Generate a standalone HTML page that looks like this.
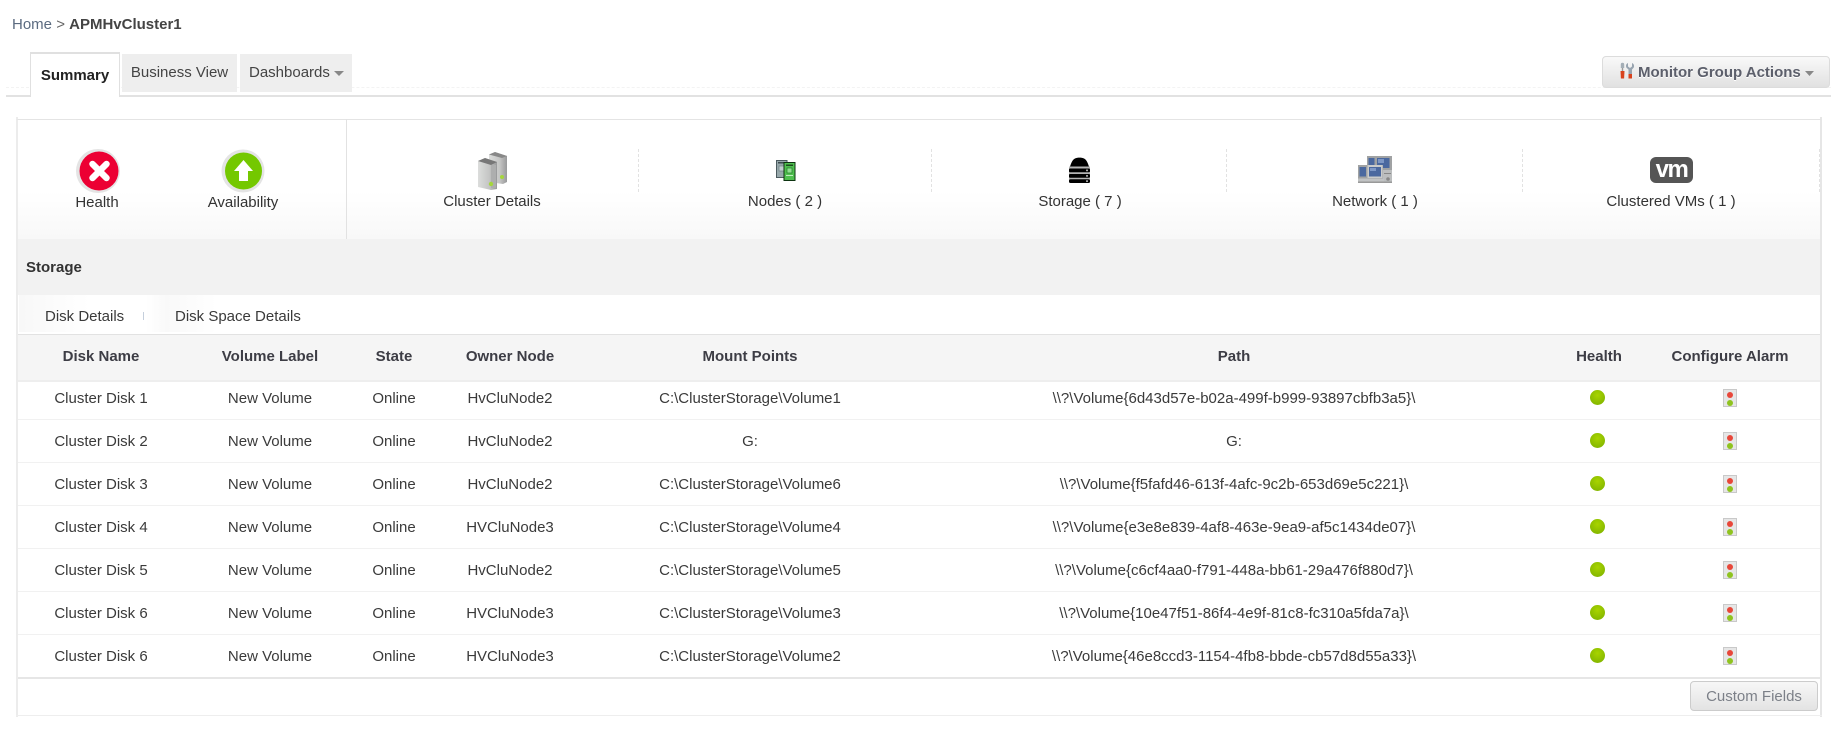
<!DOCTYPE html>
<html><head><meta charset="utf-8"><title>APMHvCluster1</title>
<style>
html,body{margin:0;padding:0;background:#fff}
body{width:1845px;height:730px;position:relative;overflow:hidden;font-family:"Liberation Sans",Arial,sans-serif;font-size:15px;color:#333}
.a{position:absolute}
.t{position:absolute;white-space:nowrap;line-height:20px;height:20px}
.ct{position:absolute;width:400px;text-align:center;white-space:nowrap;line-height:20px;height:20px}
.row{position:absolute;left:18px;width:1802px;height:43px;border-bottom:1px solid #f1f1f1;box-sizing:border-box}
.row span{position:absolute;top:12px;width:400px;text-align:center;white-space:nowrap;line-height:20px;color:#3a3a3a}
.hd span{position:absolute;top:12px;width:400px;text-align:center;white-space:nowrap;line-height:20px;font-weight:bold;color:#3d3d45}
.c1{left:-117px}.c2{left:52px}.c3{left:176px}.c4{left:292px}.c5{left:532px}.c6{left:1016px}.c7{left:1381px}.c8{left:1512px}
.dot{position:absolute;left:1572px;top:13px;width:15px;height:15px;border-radius:50%;background:radial-gradient(circle at 50% 35%,#a8d400,#86b800 75%,#9cc63a)}
.al{position:absolute;left:1705px;top:12px;width:14px;height:18px;box-sizing:border-box;border:1px solid #c9c9c9;background:#e6e6e6}
.al i{position:absolute;left:3px;width:6px;height:6px;border-radius:50%}
.al .r{top:2px;background:#e8473a}.al .g{top:10px;background:#8fc31f}
.sep{position:absolute;top:149px;height:43px;width:0;border-left:1px dashed #e2e2e2}
.tab{position:absolute;top:54px;height:38px;background:#eee;line-height:38px;text-align:center;color:#444}
</style></head><body>
<div class="t" style="left:12px;top:15px;color:#5b6b80">Home <span style="color:#666">&gt;</span> <b style="color:#444">APMHvCluster1</b></div>

<div class="a" style="left:6px;top:87px;width:1825px;border-top:1px dashed #f3f3f3"></div>
<div class="a" style="left:6px;top:95px;width:1825px;height:2px;background:#e2e2e2"></div>
<div class="a" style="left:30px;top:52px;width:90px;height:45px;box-sizing:border-box;border:1px solid #e0e0e0;border-top:2px solid #e0e0e0;border-bottom:0;background:#fff;text-align:center;line-height:43px;font-weight:bold;color:#222">Summary</div>
<div class="tab" style="left:122px;width:115px">Business View</div>
<div class="tab" style="left:240px;width:112px;text-align:left;text-indent:9px">Dashboards<svg width="10" height="6" style="position:absolute;left:94px;top:17px"><path d="M0 0H10L5 5Z" fill="#888"/></svg></div>

<div class="a" style="left:1602px;top:56px;width:228px;height:32px;box-sizing:border-box;border:1px solid #dcdcdc;border-radius:4px;background:linear-gradient(#f9f9f9,#e1e1e1)"></div>
<svg class="a" style="left:1619px;top:62px" width="16" height="17" viewBox="0 0 16 17">
<path d="M1.800 2.500a1.700 1.700 0 0 1 3.400 0V6H1.800Z" fill="#a4aeb6"/><rect x="2.800" y="6" width="1.400" height="3" fill="#999"/><path d="M1.500 9h4l-.4 7.500H1.900Z" fill="#d8431e"/>
<path d="M9 1v3.500l2 1.500 2-1.500V1c2 .8 2.600 3 1.600 4.800L13 7.500V16H9.500V7.500L7.500 5.800C6.500 4 7 1.800 9 1Z" fill="#98a4b0"/><rect x="9.500" y="12" width="3.500" height="4.500" fill="#d8431e"/>
</svg>
<div class="t" style="left:1638px;top:63px;font-weight:bold;color:#5c5f6b;text-shadow:0 1px 0 #fff">Monitor Group Actions</div>
<svg class="a" style="left:1805px;top:71px" width="9" height="6"><path d="M0 0H9L4.500 5Z" fill="#888"/></svg>

<!-- panel -->
<div class="a" style="left:16px;top:117px;width:2px;height:600px;background:#ececec"></div>
<div class="a" style="left:1820px;top:117px;width:2px;height:600px;background:#e6e6e6"></div>
<div class="a" style="left:16px;top:119px;width:1806px;height:120px;box-sizing:border-box;border-top:1px solid #e4e4e4;background:linear-gradient(#fff 60%,#f8f8f8);border-left:2px solid #ececec;border-right:2px solid #e6e6e6"></div>
<div class="a" style="left:346px;top:119px;width:1px;height:120px;background:#e2e2e2"></div>
<div class="sep" style="left:638px"></div><div class="sep" style="left:931px"></div><div class="sep" style="left:1226px"></div><div class="sep" style="left:1522px"></div><div class="sep" style="left:1819px"></div>

<!-- Health icon -->
<svg class="a" style="left:74px;top:147px" width="48" height="48" viewBox="0 0 48 48">
<circle cx="24" cy="24" r="22" fill="#e4e4e4"/><circle cx="25" cy="24" r="19.500" fill="#ec0033"/>
<path d="M25.500 24l-7-7M25.500 24l7-7M25.500 24l-7 7M25.500 24l7 7" stroke="#fff" stroke-width="6.500" stroke-linecap="round"/>
</svg>
<!-- Availability icon -->
<svg class="a" style="left:219px;top:147px" width="48" height="48" viewBox="0 0 48 48">
<circle cx="24" cy="24" r="21.500" fill="#e4e4e4"/><circle cx="24.500" cy="24" r="18.500" fill="#74c800"/>
<path d="M24.500 13L34 24H29V34H20V24H15Z" fill="#fff"/>
</svg>
<!-- Cluster icon -->
<svg class="a" style="left:476px;top:150px" width="36" height="42" viewBox="0 0 36 42">
<defs><linearGradient id="sv" x1="0" x2="1"><stop offset="0" stop-color="#dcdddc"/><stop offset=".6" stop-color="#c4c5c4"/><stop offset="1" stop-color="#98999a"/></linearGradient></defs>
<path d="M13 4.500L19 2l12 4v26l-4 2-14-2Z" fill="url(#sv)"/><path d="M13 4.500L19 2l12 4-5 2Z" fill="#888"/><circle cx="26" cy="27" r="2" fill="#a5d63c"/>
<path d="M2 11l7-3 12 4v27l-6 1-13-3Z" fill="url(#sv)"/><path d="M2 11l7-3 12 4-6 3Z" fill="#777"/><rect x="15" y="15" width="5" height="23" fill="#adaeae"/><circle cx="15" cy="34" r="2.200" fill="#a5d63c"/>
</svg>
<!-- Nodes icon -->
<svg class="a" style="left:776px;top:160px" width="20" height="21" viewBox="0 0 20 21">
<rect x=".5" y=".5" width="10.500" height="17" fill="#97a8ab" stroke="#4b5a5f"/><rect x="2" y="2" width="7" height="1.500" fill="#3d4a4e"/><rect x="3" y="6" width="5" height="5" fill="#c0cdce" stroke="#6f8084" stroke-width=".7"/>
<rect x="8" y="2.500" width="11" height="18" fill="#4fc04f" stroke="#0c3310"/><rect x="10" y="4.500" width="7" height="1.500" fill="#1d4d20"/><rect x="11" y="8" width="5" height="5" fill="#8fdf8f" stroke="#1f7a24" stroke-width=".7"/><rect x="10" y="15" width="7" height="1" fill="#bfeebf"/>
</svg>
<!-- Storage icon -->
<svg class="a" style="left:1069px;top:157px" width="21" height="26" viewBox="0 0 21 26">
<path d="M1 9.500C2 7 3 3 6 1.500 8 .3 13 .3 15 1.500 18 3 19 7 20 9.500Z" fill="#000"/>
<rect y="9.500" width="21" height="16" fill="#b5b5b5"/>
<rect x="0" y="11.500" width="21" height="3.800" rx="1" fill="#000"/><rect x="0" y="17" width="21" height="3.800" rx="1" fill="#000"/><rect x="0" y="22.300" width="21" height="3.700" rx="1.500" fill="#000"/>
<circle cx="18" cy="13.400" r="1" fill="#bbb"/><circle cx="18" cy="18.900" r="1" fill="#bbb"/><circle cx="18" cy="24.100" r="1" fill="#bbb"/>
</svg>
<!-- Network icon -->
<svg class="a" style="left:1358px;top:156px" width="34" height="27" viewBox="0 0 34 27">
<rect x="9" y="0" width="25" height="15" fill="#a0a2a3"/><rect x="10.500" y="2" width="6" height="9" fill="#4a689f"/><rect x="19" y="2" width="12.500" height="10" fill="#4a689f"/><rect x="20" y="3" width="6" height="4" fill="#7d97c5"/>
<rect x="25" y="14" width="9" height="12" fill="#bcbebf"/><rect x="26" y="17" width="7" height="1" fill="#888"/><circle cx="30" cy="23" r="1.800" fill="#888"/>
<rect x="0" y="9" width="25" height="14" fill="#a0a2a3"/><rect x="1.500" y="11" width="6.500" height="9.500" fill="#4a689f"/><rect x="9.500" y="9" width="15" height="13" fill="#c9cbcb"/><rect x="11" y="11" width="12" height="9.500" fill="#4a689f"/><rect x="12" y="12" width="6" height="3" fill="#7d97c5"/>
<rect x="0" y="22.500" width="26" height="4" fill="#c1c3c4"/><rect x="0" y="25.500" width="34" height="1.500" fill="#999"/>
</svg>
<!-- VM icon -->
<svg class="a" style="left:1650px;top:157px" width="43" height="26" viewBox="0 0 43 26">
<rect width="43" height="26" rx="6" fill="#555"/>
<text x="21.500" y="20" text-anchor="middle" font-family="Liberation Sans" font-weight="bold" font-size="24" letter-spacing="-1.500" fill="#fff">vm</text>
</svg>

<div class="ct" style="left:-103px;top:193px;color:#333">Health</div>
<div class="ct" style="left:43px;top:193px;color:#333">Availability</div>
<div class="ct" style="left:292px;top:192px;color:#333">Cluster Details</div>
<div class="ct" style="left:585px;top:192px;color:#333">Nodes ( 2 )</div>
<div class="ct" style="left:880px;top:192px;color:#333">Storage ( 7 )</div>
<div class="ct" style="left:1175px;top:192px;color:#333">Network ( 1 )</div>
<div class="ct" style="left:1471px;top:192px;color:#333">Clustered VMs ( 1 )</div>

<!-- storage header -->
<div class="a" style="left:18px;top:239px;width:1802px;height:56px;background:#f2f2f2"></div>
<div class="t" style="left:26px;top:258px;font-weight:bold;color:#333">Storage</div>

<div class="a" style="left:19px;top:295px;width:283px;height:37px;background:linear-gradient(90deg,#f8f8f8,#fff 25%,#fff 45%,#f9f9f9 52%,#fff 70%)"></div>
<div class="t" style="left:45px;top:307px;color:#3a3a3a">Disk Details</div>
<div class="a" style="left:143px;top:312px;width:1px;height:8px;background:#c5cfdc"></div>
<div class="t" style="left:175px;top:307px;color:#3a3a3a">Disk Space Details</div>

<!-- table -->
<div class="a hd" style="left:18px;top:334px;width:1802px;height:48px;box-sizing:border-box;border-top:1px solid #e2e2e2;border-bottom:2px solid #eee;background:#f5f5f5">
<span class="c1">Disk Name</span><span class="c2">Volume Label</span><span class="c3">State</span><span class="c4">Owner Node</span><span class="c5">Mount Points</span><span class="c6">Path</span><span class="c7">Health</span><span class="c8">Configure Alarm</span>
</div>

<div class="row" style="top:377px"><span class="c1">Cluster Disk 1</span><span class="c2">New Volume</span><span class="c3">Online</span><span class="c4">HvCluNode2</span><span class="c5">C:\ClusterStorage\Volume1</span><span class="c6">\\?\Volume{6d43d57e-b02a-499f-b999-93897cbfb3a5}\</span><div class="dot"></div><div class="al"><i class="r"></i><i class="g"></i></div></div>
<div class="row" style="top:420px"><span class="c1">Cluster Disk 2</span><span class="c2">New Volume</span><span class="c3">Online</span><span class="c4">HvCluNode2</span><span class="c5">G:</span><span class="c6">G:</span><div class="dot"></div><div class="al"><i class="r"></i><i class="g"></i></div></div>
<div class="row" style="top:463px"><span class="c1">Cluster Disk 3</span><span class="c2">New Volume</span><span class="c3">Online</span><span class="c4">HvCluNode2</span><span class="c5">C:\ClusterStorage\Volume6</span><span class="c6">\\?\Volume{f5fafd46-613f-4afc-9c2b-653d69e5c221}\</span><div class="dot"></div><div class="al"><i class="r"></i><i class="g"></i></div></div>
<div class="row" style="top:506px"><span class="c1">Cluster Disk 4</span><span class="c2">New Volume</span><span class="c3">Online</span><span class="c4">HVCluNode3</span><span class="c5">C:\ClusterStorage\Volume4</span><span class="c6">\\?\Volume{e3e8e839-4af8-463e-9ea9-af5c1434de07}\</span><div class="dot"></div><div class="al"><i class="r"></i><i class="g"></i></div></div>
<div class="row" style="top:549px"><span class="c1">Cluster Disk 5</span><span class="c2">New Volume</span><span class="c3">Online</span><span class="c4">HvCluNode2</span><span class="c5">C:\ClusterStorage\Volume5</span><span class="c6">\\?\Volume{c6cf4aa0-f791-448a-bb61-29a476f880d7}\</span><div class="dot"></div><div class="al"><i class="r"></i><i class="g"></i></div></div>
<div class="row" style="top:592px"><span class="c1">Cluster Disk 6</span><span class="c2">New Volume</span><span class="c3">Online</span><span class="c4">HVCluNode3</span><span class="c5">C:\ClusterStorage\Volume3</span><span class="c6">\\?\Volume{10e47f51-86f4-4e9f-81c8-fc310a5fda7a}\</span><div class="dot"></div><div class="al"><i class="r"></i><i class="g"></i></div></div>
<div class="row" style="top:635px;height:44px;border-bottom:2px solid #e6e6e6"><span class="c1">Cluster Disk 6</span><span class="c2">New Volume</span><span class="c3">Online</span><span class="c4">HVCluNode3</span><span class="c5">C:\ClusterStorage\Volume2</span><span class="c6">\\?\Volume{46e8ccd3-1154-4fb8-bbde-cb57d8d55a33}\</span><div class="dot"></div><div class="al"><i class="r"></i><i class="g"></i></div></div>

<div class="a" style="left:1690px;top:681px;width:128px;height:30px;box-sizing:border-box;border:1px solid #ccc;border-radius:4px;background:linear-gradient(#f7f7f7,#e3e3e3);text-align:center;line-height:30px;color:#7c8088">Custom Fields</div>
<div class="a" style="left:16px;top:715px;width:1806px;height:1px;background:#eee"></div>
</body></html>
